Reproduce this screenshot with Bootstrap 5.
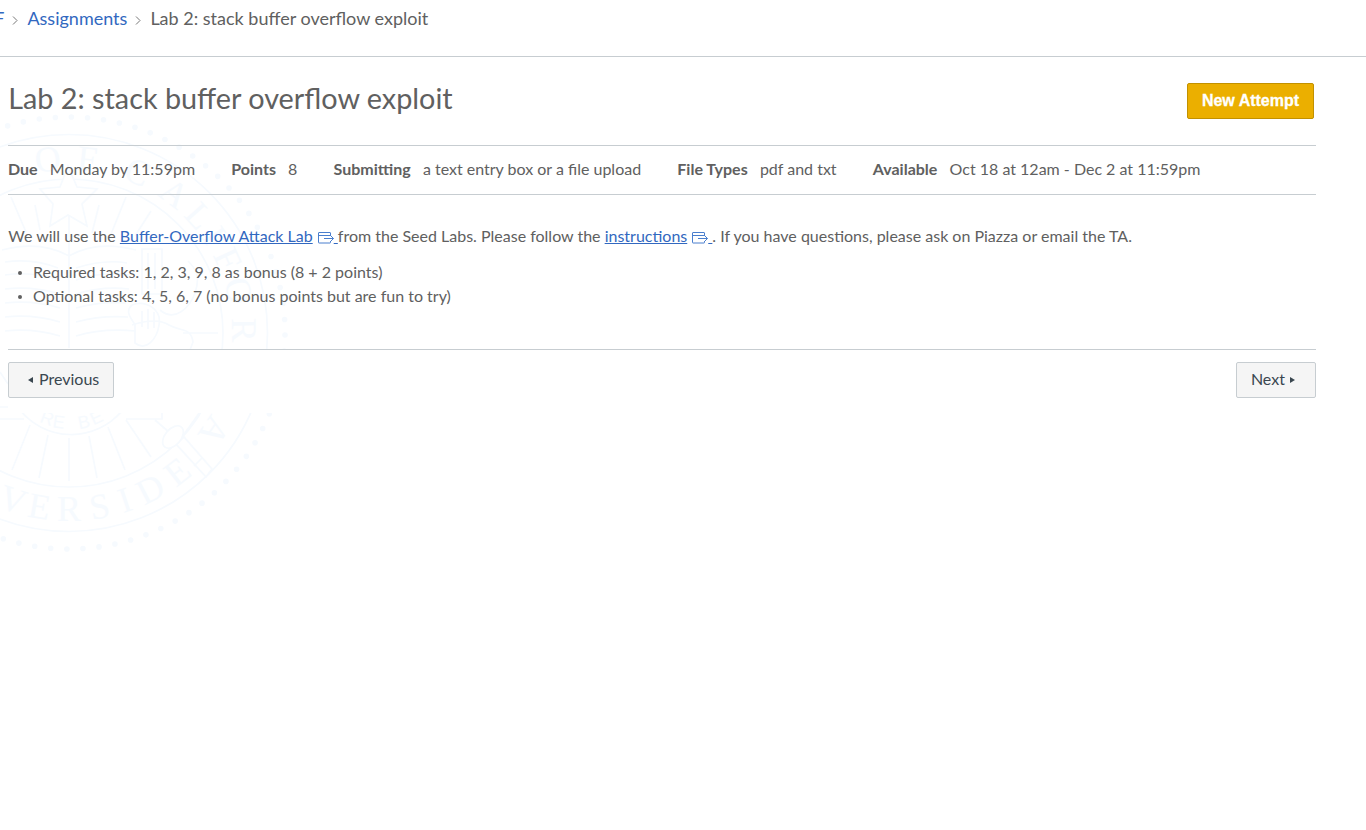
<!DOCTYPE html>
<html lang="en">
<head>
<meta charset="utf-8">
<title>Lab 2: stack buffer overflow exploit</title>
<link href="https://cdn.jsdelivr.net/npm/bootstrap@5.3.0/dist/css/bootstrap.min.css" rel="stylesheet">
<style>
body{font-family:Lato,sans-serif;font-size:16px;line-height:24px;color:#606060;background:#fff;overflow:hidden;min-height:830px}
a{color:#3268c0}
.crumbs{height:57px;border-bottom:1px solid #c7cdd1;font-size:18px;line-height:26px;padding-top:5px;white-space:nowrap;overflow:hidden}
.crumbs ol{margin-left:-5.8px}
.crumbs svg{width:6px;height:9px;margin:4px 9px 0 8px}
.page-body{margin-left:8px;width:1308px;position:relative}
.title-row{height:88px;padding-top:22px}
h1{font-size:28.8px;line-height:40px;font-weight:400;margin:-1px 0 0 .2px}
.btn{border-radius:2px;height:36px;line-height:20px;padding:6px 14px}
.btn-attempt{background:#ebaf00;border:1px solid #c29100;color:#fff;font:700 16px/20px "Liberation Sans",sans-serif;-webkit-text-stroke:.3px #fff;width:127px;padding:7px 0;margin:4px 2px 0 0}
.facts{height:50px;border-top:1px solid #c7cdd1;border-bottom:1px solid #c7cdd1;padding-bottom:2px}
.facts b{margin-right:12.2px}
.facts span{margin-right:36.2px;white-space:nowrap}
.task{height:154px;padding-top:29px}
.task p{margin-bottom:12px;padding-left:.3px}
.task ul{padding-left:25px;list-style:none}
.task li{position:relative}
.task li::before{content:"";position:absolute;left:-15px;top:11px;width:4px;height:4px;border-radius:50%;background:#606060}
.ext{width:16px;height:13px;margin:0 0 0 5px;vertical-align:-2px}
.pager{height:64px;border-top:1px solid #c7cdd1;padding-top:12px;background:#fff}
.btn-page{background:#f5f5f5;border:1px solid #c7cdd1;color:#3a4750}
.btn-page svg{width:5px;height:6px;vertical-align:2.5px}
.btn-prev svg{margin:0 6px 0 5px}
.btn-next svg{margin:0 6px 0 1px}
.seal{position:absolute;left:0;top:57px;z-index:-1}
.seal text{font-family:"Liberation Serif",serif;font-size:36px;fill:#f6fafe;stroke:none;text-anchor:middle}
.seal .motto{font-family:"Liberation Sans",sans-serif;font-size:18px}
</style>
</head>
<body>
<svg class="seal" width="300" height="510" viewBox="0 57 300 510" fill="none" stroke="#f6fafe" stroke-width="1.7" aria-hidden="true">
<circle cx="69" cy="333" r="216" stroke-width="5.6" stroke-linecap="round" stroke-dasharray="0 16.157" stroke-dashoffset="-2"/>
<circle cx="69" cy="333" r="198.5"/><circle cx="69" cy="333" r="154"/>
<g transform="translate(69 333)">
<text transform="rotate(-7)" y="-163">O</text><text transform="rotate(6)" y="-163">F</text><text transform="rotate(23)" y="-163">C</text><text transform="rotate(37)" y="-163">A</text><text transform="rotate(48)" y="-163">L</text><text transform="rotate(56)" y="-163">I</text><text transform="rotate(65)" y="-163">F</text><text transform="rotate(76)" y="-163">O</text><text transform="rotate(89)" y="-163">R</text><text transform="rotate(124)" y="-163">A</text>
<text transform="rotate(18.6)" y="188">V</text><text transform="rotate(9.7)" y="188">E</text><text y="188">R</text><text transform="rotate(-10)" y="188">S</text><text transform="rotate(-18.5)" y="188">I</text><text transform="rotate(-27.5)" y="188">D</text><text transform="rotate(-38)" y="188">E</text>
</g>
<path fill="#fff" d="m68 166 9 21 20 2-15 15 5 22-19-11-18 11 3-22-13-15 20-2z"/>
<path d="M69 215v133M11 197l15 35M35 205l5 25M99 205l-7 28M126 197l-15 37M151 211l-16 25M2 250q38-10 67 6 28-16 67-6"/>
<path d="M5 262q28-4 53 6M5 275q28-4 55 5M5 289q28-3 55 5M5 303q28-3 55 5M5 317q28-3 55 5M5 331q28-3 55 5M76 268q28-9 51-5M76 280q26-9 54-5M76 294q26-8 53-5M76 308q26-7 50-5M76 322q26-7 52-5M76 336q26-8 60-5"/>
<path d="M142 249h20v45h-20zM148 253v36M155 253v36M132 305c-8 7 0 14 3 20v18c11 9 22-4 24-18 3-16-13-25-27-20M142 311v16M148 309v20M154 312v16M160 310c15 13 30-3 35-17 6-17 0-25-7-32M132 325q24-8 37 0c12 7 22 2 24 17l-3 8M183 333h35M0 407h8M0 372l8 12"/>
<path d="M20 410a66 66 0 0 0 101 2M30 425l-18 45M48 435l-9 43M69 438v43M89 436l8 42M108 427l17 43M126 420l25 37M126 419h36v-8M0 419h24M155 420l15 13M200 412l-18 25"/>
<path fill="#fff" d="m176 444 8-7 28 32-6 8z"/><path d="m194 466 8-8"/><ellipse cx="173" cy="437" rx="13" ry="8" transform="rotate(-50 173 437)" fill="#fff"/>
<g><text class="motto" transform="translate(45 424) rotate(20)">R</text><text class="motto" transform="translate(58 428) rotate(8)">E</text><text class="motto" transform="translate(85 428) rotate(-12)">B</text><text class="motto" transform="translate(99 423) rotate(-25)">E</text></g>
</svg>
<nav class="crumbs"><ol class="list-unstyled d-flex align-items-center mb-0"><li><a class="text-decoration-none" href="#">F</a></li><li class="d-flex align-items-center"><svg viewBox="0 0 6 9" fill="none" stroke="#777"><path d="M1 .5 5 4.5 1 8.5"/></svg><a class="text-decoration-none" href="#">Assignments</a></li><li class="d-flex align-items-center"><svg viewBox="0 0 6 9" fill="none" stroke="#777"><path d="M1 .5 5 4.5 1 8.5"/></svg>Lab 2: stack buffer overflow exploit</li></ol></nav>
<main class="page-body">
<div class="title-row d-flex justify-content-between align-items-start"><h1>Lab 2: stack buffer overflow exploit</h1><button class="btn btn-attempt">New Attempt</button></div>
<div class="facts d-flex align-items-center"><span><b>Due</b>Monday by 11:59pm</span><span><b>Points</b>8</span><span><b>Submitting</b>a text entry box or a file upload</span><span><b>File Types</b>pdf and txt</span><span><b>Available</b>Oct 18 at 12am - Dec 2 at 11:59pm</span></div>
<section class="task"><p>We will use the <a href="#">Buffer-Overflow Attack Lab</a><a href="#"><svg class="ext" viewBox="0 0 16 13" fill="none" stroke="#4a7fce"><path d="M12.5 5V2q0-.5-.5-.5H1q-.5 0-.5.5v9.500q0 .5.5.5h11q.5 0 .5-.5V10M.5 4.500h12M6 7.500h9.500M13 5l2.500 2.500L13 10"/></svg>&nbsp;</a>from the Seed Labs. Please follow the <a href="#">instructions</a><a href="#"><svg class="ext" viewBox="0 0 16 13" fill="none" stroke="#4a7fce"><path d="M12.5 5V2q0-.5-.5-.5H1q-.5 0-.5.5v9.500q0 .5.5.5h11q.5 0 .5-.5V10M.5 4.500h12M6 7.500h9.500M13 5l2.500 2.500L13 10"/></svg>&nbsp;</a>. If you have questions, please ask on Piazza or email the TA.</p>
<ul class="mb-0"><li>Required tasks: 1, 2, 3, 9, 8 as bonus (8 + 2 points)</li><li>Optional tasks: 4, 5, 6, 7 (no bonus points but are fun to try)</li></ul></section>
<div class="pager d-flex justify-content-between align-items-start"><a class="btn btn-page btn-prev" href="#"><svg viewBox="0 0 5 6" fill="currentColor"><path d="M5 0v6L0 3z"/></svg>Previous</a><a class="btn btn-page btn-next" href="#">Next <svg viewBox="0 0 5 6" fill="currentColor"><path d="M0 0v6l5-3z"/></svg></a></div>
</main>
<script src="https://cdn.jsdelivr.net/npm/bootstrap@5.3.0/dist/js/bootstrap.bundle.min.js"></script>
</body>
</html>
